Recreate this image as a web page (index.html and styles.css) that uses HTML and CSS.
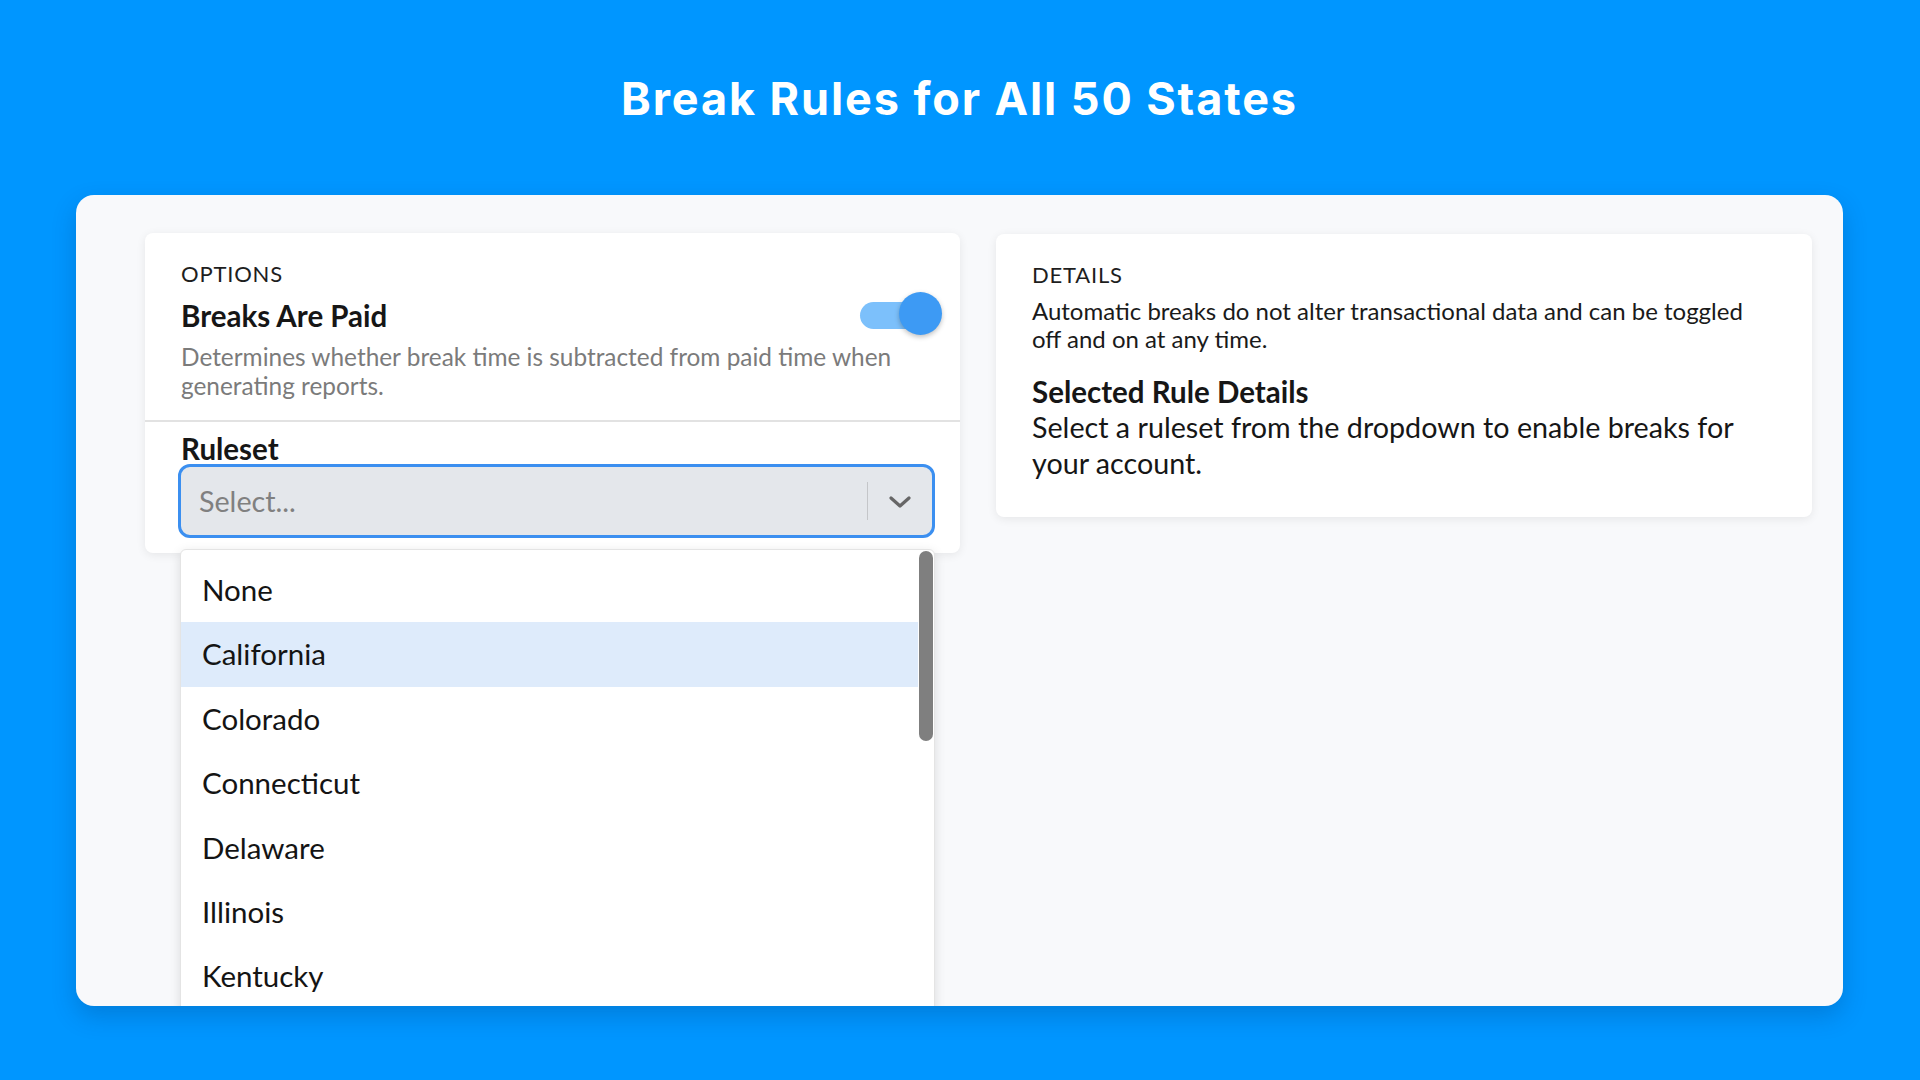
FILE: index.html
```html
<!DOCTYPE html>
<html lang="en">
<head>
<meta charset="utf-8">
<title>Break Rules for All 50 States</title>
<link rel="stylesheet" href="styles.css">
</head>
<body>
<div class="page">
  <h1 class="title">Break Rules for All 50 States</h1>
  <div class="panel">
    <div class="cols">
      <section class="card options">
        <div class="label">OPTIONS</div>
        <div class="head-row">
          <div class="head">Breaks Are Paid</div>
          <div class="toggle"><span class="track"></span><span class="thumb"></span></div>
        </div>
        <p class="desc">Determines whether break time is subtracted from paid time when generating reports.</p>
        <div class="divider"></div>
        <div class="ruleset">Ruleset</div>
        <div class="select">
          <span class="placeholder">Select...</span>
          <span class="sep"></span>
          <span class="chev"><svg width="22" height="12" viewBox="0 0 22 12"><path d="M2 2 L11 10 L20 2" fill="none" stroke="#666" stroke-width="3.2" stroke-linecap="round" stroke-linejoin="round"/></svg></span>
        </div>
        <div class="menu">
          <ul class="list">
            <li>None</li>
            <li class="active">California</li>
            <li>Colorado</li>
            <li>Connecticut</li>
            <li>Delaware</li>
            <li>Illinois</li>
            <li>Kentucky</li>
          </ul>
          <div class="scroll"><span class="bar"></span></div>
        </div>
      </section>
      <section class="card details">
        <div class="label">DETAILS</div>
        <p class="dtext">Automatic breaks do not alter transactional data and can be toggled off and on at any time.</p>
        <div class="dhead">Selected Rule Details</div>
        <p class="dbody">Select a ruleset from the dropdown to enable breaks for your account.</p>
      </section>
    </div>
  </div>
</div>
</body>
</html>
```
FILE: styles.css
```css
* { box-sizing: border-box; }
html, body { margin: 0; padding: 0; }
body {
  background: #0096ff;
  font-family: "Lato", "Open Sans", sans-serif;
  color: #1b1b1b;
  width: 1920px;
  height: 1080px;
  overflow: hidden;
}
.page {
  padding: 72px 77px 0 76px;
}
.title {
  margin: 0 0 69px;
  font-family: "Inter", "Open Sans", sans-serif;
  font-weight: 700;
  font-size: 45px;
  line-height: 54px;
  color: #fff;
  text-align: center;
  letter-spacing: 1.9px;
}
.panel {
  height: 811px;
  background: #f8f9fb;
  border-radius: 18px;
  overflow: hidden;
  box-shadow: 0 10px 24px rgba(0, 40, 90, 0.22);
}
.cols {
  display: grid;
  grid-template-columns: 815px 816px;
  column-gap: 36px;
  align-items: start;
  padding: 38px 31px 0 69px;
}
.card {
  background: #fff;
  border-radius: 8px;
  box-shadow: 0 2px 10px rgba(0, 0, 0, 0.08);
}
.options {
  position: relative;
  padding: 29px 25px 15px 36px;
}
.details {
  margin-top: 1px;
  padding: 29px 50px 36px 36px;
}
.label {
  font-size: 22px;
  line-height: 24px;
  letter-spacing: 0.8px;
  color: #1e1e1e;
}
.head-row {
  display: flex;
  align-items: flex-start;
  justify-content: space-between;
  margin-top: 13px;
  margin-right: -7px;
}
.head {
  font-weight: 700;
  font-size: 29.5px;
  line-height: 34px;
  color: #161616;
}
.toggle {
  position: relative;
  width: 82px;
  height: 43px;
  margin-top: -7px;
  margin-bottom: -2px;
}
.toggle .track {
  position: absolute;
  left: 0;
  top: 10px;
  width: 70px;
  height: 27px;
  border-radius: 14px;
  background: #7cc0fb;
}
.toggle .thumb {
  position: absolute;
  right: 0;
  top: 0;
  width: 43px;
  height: 43px;
  border-radius: 50%;
  background: #3d9af4;
  box-shadow: 0 2px 5px rgba(0, 0, 0, 0.25);
}
.desc {
  margin: 9px 0 0;
  font-size: 24.4px;
  line-height: 29px;
  color: #7b7b7b;
  padding-right: 10px;
}
.divider {
  height: 2px;
  background: #e2e2e2;
  margin: 20px -25px 0 -36px;
}
.ruleset {
  margin-top: 12px;
  font-weight: 700;
  font-size: 29.5px;
  line-height: 30px;
  color: #161616;
}
.select {
  display: flex;
  align-items: center;
  width: 757px;
  height: 74px;
  margin-left: -3px;
  border: 3px solid #3b8ff0;
  border-radius: 12px;
  background: #e4e7eb;
}
.placeholder {
  flex: 1;
  padding-left: 18px;
  font-size: 28.7px;
  color: #808080;
}
.sep {
  width: 1px;
  height: 38px;
  background: #c4c6c9;
}
.chev {
  width: 64px;
  display: flex;
  justify-content: center;
  align-items: center;
  padding-top: 2px;
}
.chev svg { display: block; }
.menu {
  position: absolute;
  left: 35px;
  top: 316px;
  width: 755px;
  height: 700px;
  display: flex;
  background: #fff;
  border-radius: 6px;
  border: 1px solid #e4e4e4;
  box-shadow: 0 3px 12px rgba(0, 0, 0, 0.12);
  z-index: 5;
}
.list {
  flex: 1;
  list-style: none;
  margin: 0;
  padding: 8px 0 0;
}
.list li {
  height: 64.4px;
  line-height: 64.4px;
  padding-left: 21px;
  font-size: 29.5px;
  color: #141414;
}
.list li.active {
  background: #deebfb;
}
.scroll {
  width: 16px;
  padding: 1px 1px 0 1px;
}
.scroll .bar {
  display: block;
  width: 14px;
  height: 190px;
  border-radius: 7px;
  background: #7f7f7f;
}
.dtext {
  margin: 10px 0 0;
  font-size: 24px;
  line-height: 28px;
  color: #1a1a1a;
}
.dhead {
  margin-top: 22px;
  font-weight: 700;
  font-size: 29.5px;
  line-height: 34px;
  color: #161616;
}
.dbody {
  margin: 0;
  font-size: 28.7px;
  line-height: 36px;
  color: #161616;
}
```
